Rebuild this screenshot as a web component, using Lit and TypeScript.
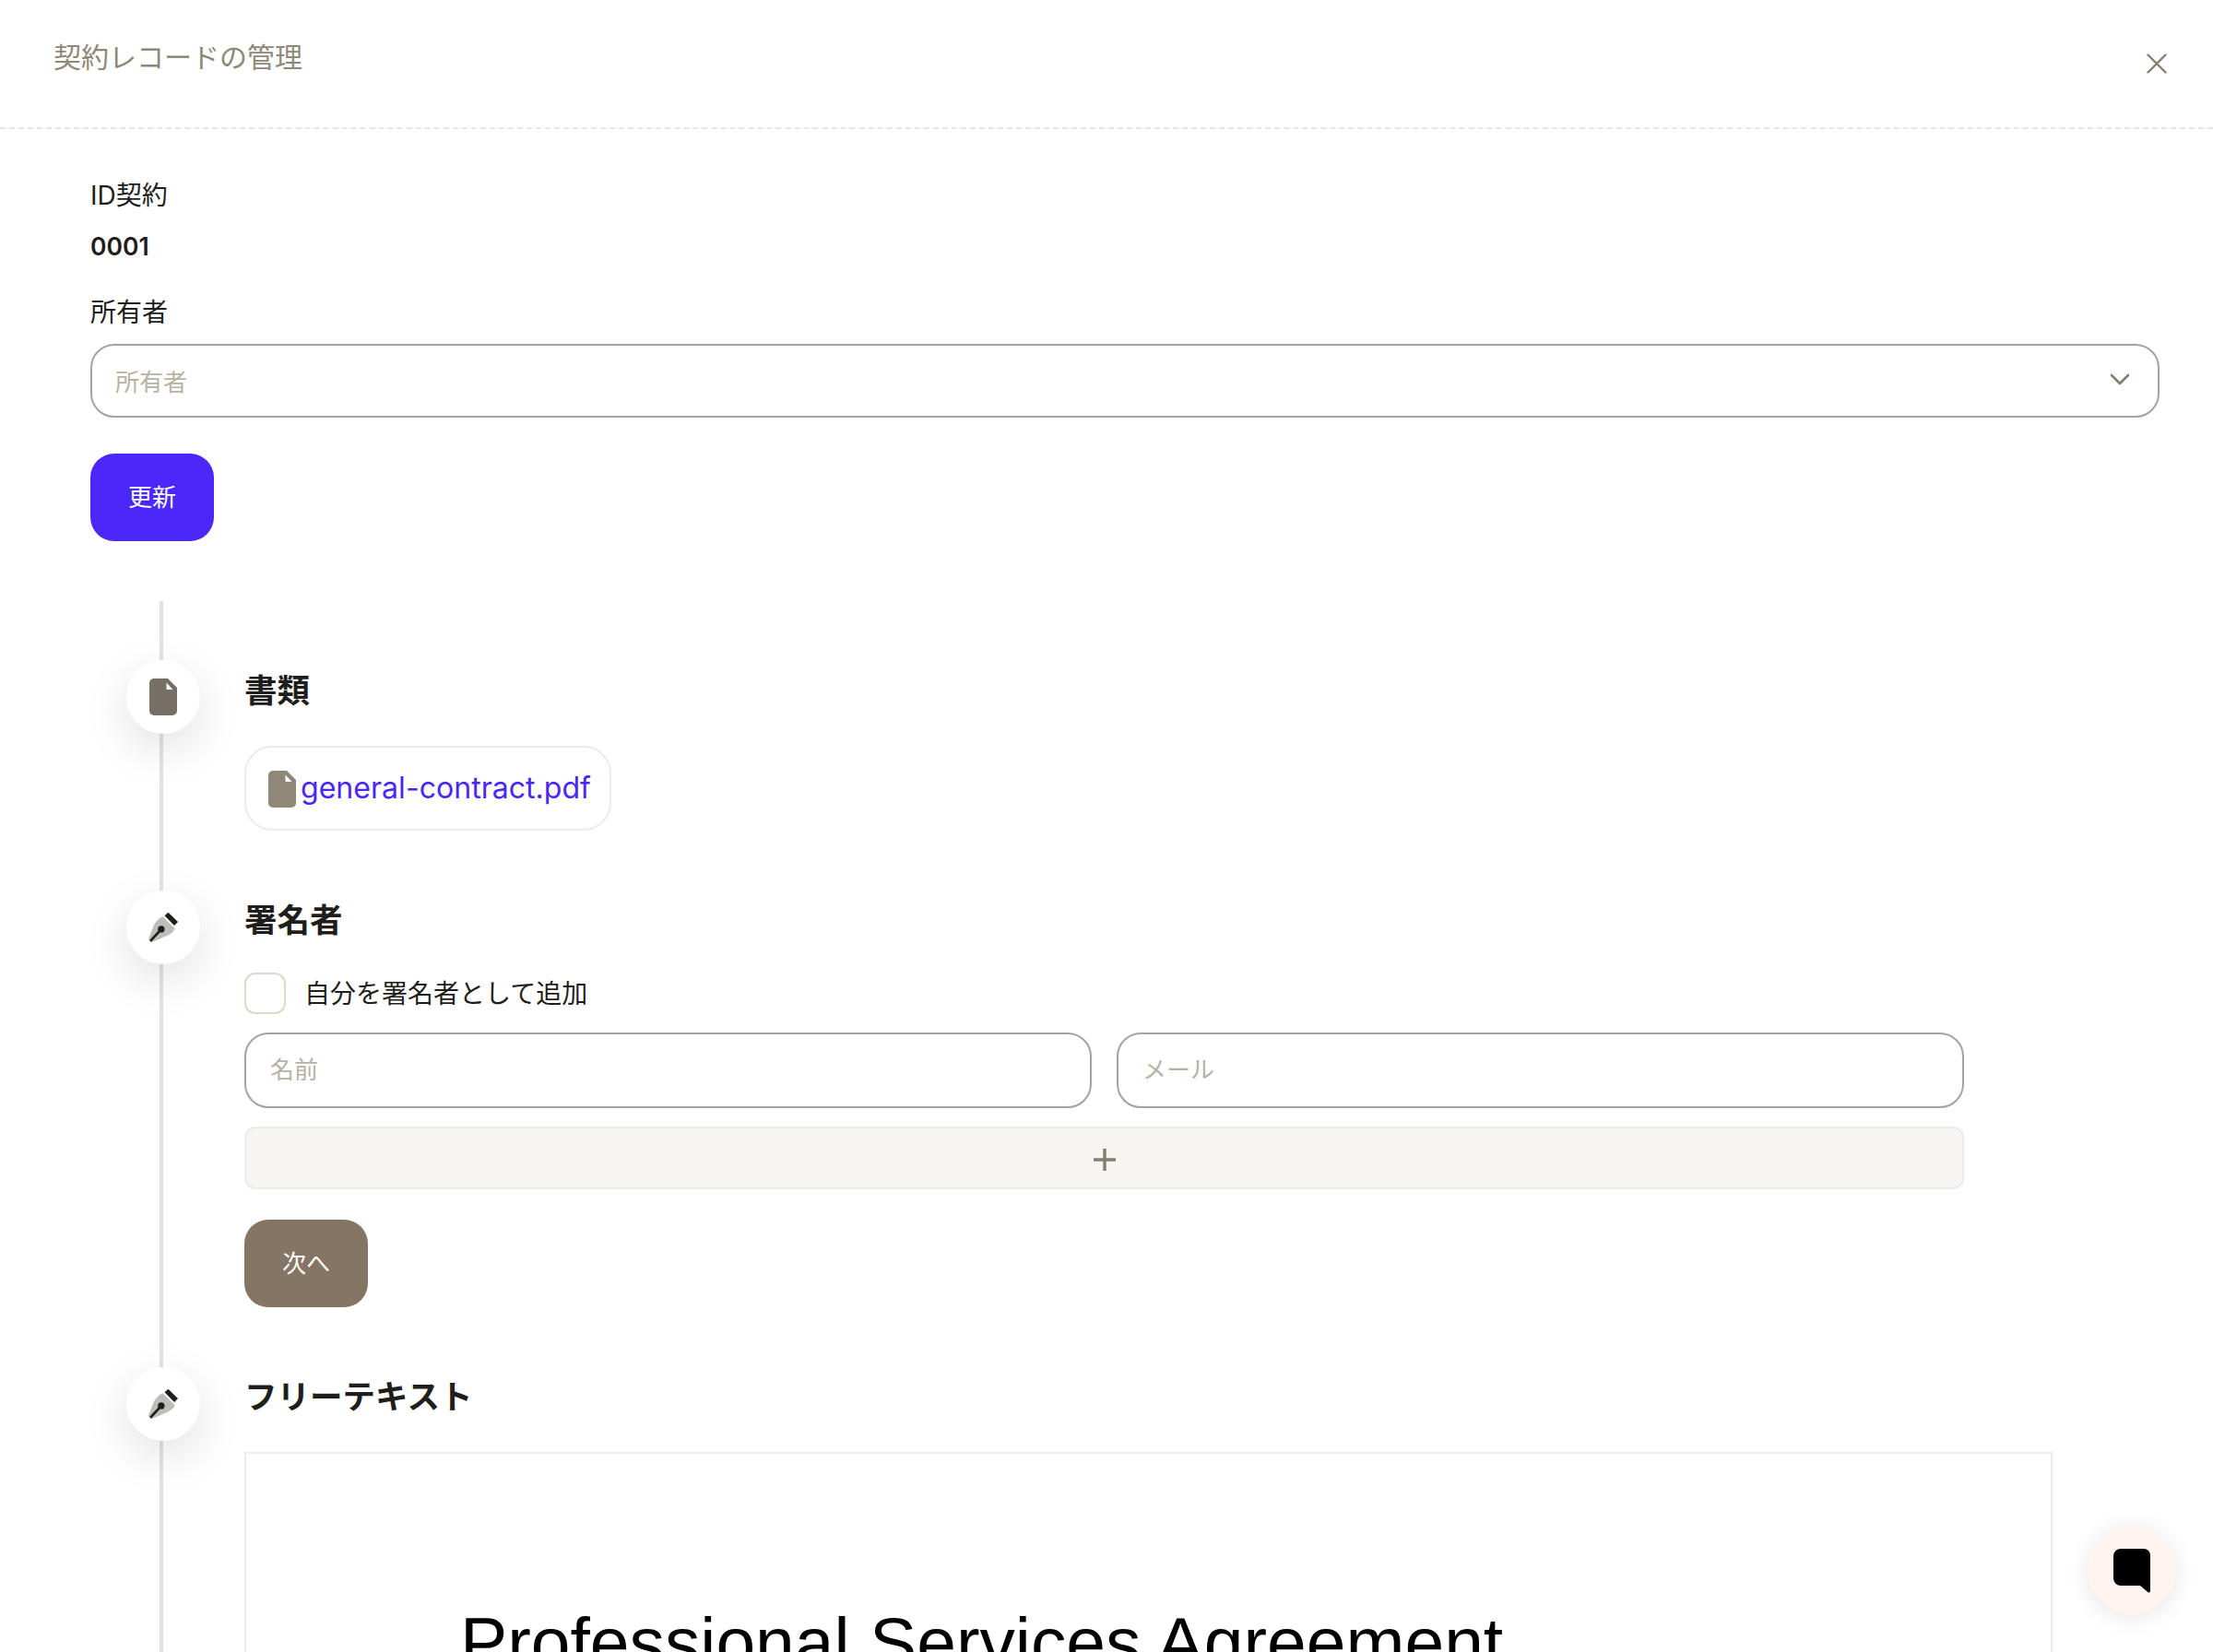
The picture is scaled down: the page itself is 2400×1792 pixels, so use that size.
import { LitElement, html, css } from "lit";
import { customElement } from "lit/decorators.js";

const fileIcon = (cls: string) => html`<svg class=${cls} viewBox="0 0 30 40" aria-hidden="true">
  <path fill="currentColor" d="M5 0H20L30 10V35a5 5 0 0 1-5 5H5a5 5 0 0 1-5-5V5a5 5 0 0 1 5-5Z"/>
  <path fill="#fff" d="M18.5 4.5 25.5 12H19.5a1 1 0 0 1-1-1Z"/>
</svg>`;

const penIcon = html`<svg class="pen" viewBox="0 0 100 105" aria-hidden="true">
  <path fill="#bdbdbb" d="M47 15 87 55C80 70 70 75 45 85L10 100 0 90 15 50C23 30 35 20 47 15Z"/>
  <path fill="#1f1e1c" d="M53 12 65 2 97 33 85 45Z"/>
  <circle cx="42" cy="57" r="11" fill="#1f1e1c"/>
  <path d="M42 57 6 96" stroke="#1f1e1c" stroke-width="8" fill="none"/>
</svg>`;

@customElement("app-root")
export class AppRoot extends LitElement {
  static styles = css`
    :host {
      display: block;
      width: 2400px;
      height: 1792px;
      overflow: hidden;
      position: relative;
      background: #fff;
      color: #1f1e1c;
      font-family: Inter, "Noto Sans CJK JP", sans-serif;
    }
    * { box-sizing: border-box; }
    .header {
      height: 140px;
      border-bottom: 2px dashed #e9e6dc;
      padding: 42px 50px 0 58px;
      display: flex;
      justify-content: space-between;
      align-items: flex-start;
    }
    .title { font-size: 30px; line-height: 40px; color: #8f8878; }
    .close { width: 22px; height: 22px; margin-top: 16px; color: #857e6e; }
    .main {
      padding: 54px 58px 0 98px;
      display: flex;
      flex-direction: column;
    }
    .label { font-size: 28px; line-height: 36px; }
    .value { font-size: 26.5px; line-height: 36px; font-weight: 600; margin-top: 19px; }
    .owner { margin-top: 36px; }
    .select {
      margin-top: 16px;
      height: 80px;
      border: 2px solid #a3a3a3;
      border-radius: 26px;
      padding: 0 30px 2px 25px;
      display: flex;
      align-items: center;
      justify-content: space-between;
      font-size: 26px;
      color: #b8b2a3;
    }
    .chev { width: 22px; height: 14px; color: #857e6e; }
    .btn {
      width: 134px;
      height: 95px;
      border: none;
      border-radius: 26px;
      padding-bottom: 4px;
      color: #fff;
      font: inherit;
      font-size: 26px;
      display: flex;
      align-items: center;
      justify-content: center;
    }
    .primary { background: #4b27fa; margin-top: 39px; }
    .next { background: #847564; margin-top: 33px; padding-bottom: 5px; }
    .timeline {
      position: relative;
      margin-top: 65px;
      padding: 64px 0 0 39px;
      display: flex;
      flex-direction: column;
      gap: 65px;
    }
    .line {
      position: absolute;
      left: 75px;
      top: 0;
      bottom: -800px;
      width: 4px;
      background: #e2e2e2;
    }
    .step {
      position: relative;
      display: grid;
      grid-template-columns: 80px 1961px;
      column-gap: 48px;
      align-items: start;
    }
    .dot {
      width: 80px;
      height: 80px;
      border-radius: 50%;
      background: #fff;
      box-shadow: 0 16px 50px rgba(0, 0, 0, 0.12);
      display: flex;
      align-items: center;
      justify-content: center;
    }
    .dot-file { width: 30px; height: 40px; color: #766f66; }
    .pen { width: 33px; height: 35px; }
    .heading {
      font-size: 35.5px;
      line-height: 50px;
      font-weight: 700;
      margin-top: 8px;
      margin-bottom: -1px;
    }
    .first { margin-top: 9px; }
    .pill {
      margin-top: 35px;
      width: 398px;
      height: 92px;
      border: 2px solid #ececea;
      border-radius: 30px;
      padding: 25px 0 0 24px;
      display: flex;
      align-items: flex-start;
      gap: 5px;
    }
    .pill-file { width: 30px; height: 40px; color: #8f8878; flex: none; }
    .link { font-size: 32.1px; line-height: 38px; color: #4a27f5; white-space: nowrap; }
    .signers { width: 1865px; display: flex; flex-direction: column; }
    .check-row { margin-top: 32px; display: flex; align-items: center; gap: 20px; font-size: 28px; line-height: 44px; }
    .box { width: 45px; height: 45px; border: 2px solid #e0d8c8; border-radius: 12px; }
    .inputs { margin-top: 20px; display: grid; grid-template-columns: 1fr 1fr; gap: 27px; }
    .field {
      height: 82px;
      border: 2px solid #a3a3a3;
      border-radius: 26px;
      padding: 0 26px 2px;
      font: inherit;
      font-size: 26px;
      width: 100%;
      outline: none;
      background: #fff;
    }
    .field::placeholder { color: #b8b2a3; opacity: 1; }
    .add {
      margin-top: 20px;
      height: 68px;
      border: 2px solid #ececea;
      border-radius: 12px;
      background: #f6f5f1;
      padding-top: 4px;
      display: flex;
      align-items: center;
      justify-content: center;
    }
    .plus { width: 28px; height: 28px; color: #857e6e; }
    .doc {
      margin-top: 35px;
      height: 800px;
      border: 2px solid #ececea;
      padding: 167px 0 0 232px;
      font-family: "Liberation Sans", Arial, sans-serif;
      font-size: 76.8px;
      line-height: 74px;
      color: #000;
      white-space: nowrap;
    }
    .fab {
      position: absolute;
      left: 2264px;
      top: 1656px;
      width: 96px;
      height: 96px;
      border-radius: 50%;
      background: #fff4f0;
      box-shadow: 0 2px 24px rgba(0, 0, 0, 0.1);
      display: flex;
      align-items: center;
      justify-content: center;
    }
    .bubble { width: 40px; height: 48px; }
  `;

  render() {
    return html`
      <div class="header">
        <div class="title">契約レコードの管理</div>
        <svg class="close" viewBox="0 0 22 22" aria-hidden="true">
          <path d="M1.5 1.5 20.5 20.5M20.5 1.5 1.5 20.5" stroke="currentColor" stroke-width="2.4" fill="none" stroke-linecap="round"/>
        </svg>
      </div>
      <div class="main">
        <div class="label">ID契約</div>
        <div class="value">0001</div>
        <div class="label owner">所有者</div>
        <div class="select">
          <span>所有者</span>
          <svg class="chev" viewBox="0 0 22 14" aria-hidden="true">
            <path d="M2 2 11 11 20 2" stroke="currentColor" stroke-width="2.6" fill="none" stroke-linecap="round" stroke-linejoin="round"/>
          </svg>
        </div>
        <div class="btn primary">更新</div>
        <div class="timeline">
          <div class="line"></div>
          <div class="step">
            <div class="dot">${fileIcon("dot-file")}</div>
            <div>
              <div class="heading first">書類</div>
              <div class="pill">${fileIcon("pill-file")}<span class="link">general-contract.pdf</span></div>
            </div>
          </div>
          <div class="step">
            <div class="dot">${penIcon}</div>
            <div class="signers">
              <div class="heading">署名者</div>
              <div class="check-row"><div class="box"></div><span>自分を署名者として追加</span></div>
              <div class="inputs">
                <input class="field" placeholder="名前" />
                <input class="field" placeholder="メール" />
              </div>
              <div class="add">
                <svg class="plus" viewBox="0 0 28 28" aria-hidden="true">
                  <path d="M14 2V26M2 14H26" stroke="currentColor" stroke-width="3.4" fill="none"/>
                </svg>
              </div>
              <div class="btn next">次へ</div>
            </div>
          </div>
          <div class="step">
            <div class="dot">${penIcon}</div>
            <div>
              <div class="heading">フリーテキスト</div>
              <div class="doc">Professional Services Agreement</div>
            </div>
          </div>
        </div>
      </div>
      <div class="fab">
        <svg class="bubble" viewBox="0 0 40 48" aria-hidden="true">
          <path fill="#000" d="M8 0H33a7 7 0 0 1 7 7V46a1.5 1.5 0 0 1-2.4 1.2L29 40H8a8 8 0 0 1-8-8V8a8 8 0 0 1 8-8Z"/>
        </svg>
      </div>
    `;
  }
}
